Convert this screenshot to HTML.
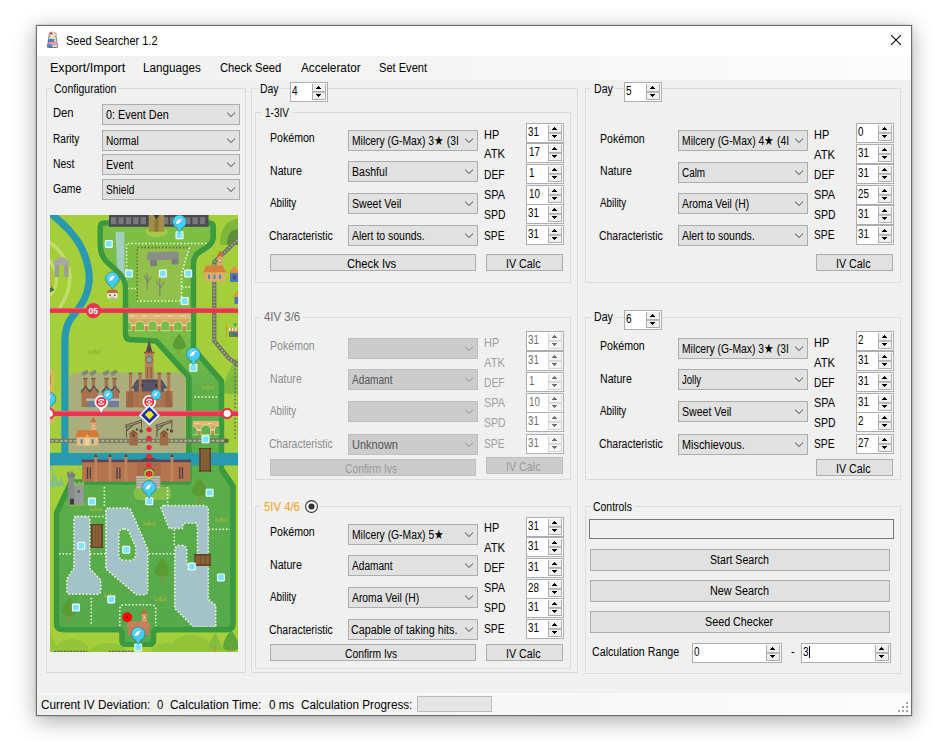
<!DOCTYPE html><html><head><meta charset="utf-8"><title>Seed Searcher 1.2</title><style>
*{box-sizing:border-box;margin:0;padding:0}
html,body{width:943px;height:742px;overflow:hidden;background:#fff}
body{position:relative;font-family:"Liberation Sans",sans-serif;font-size:12px;color:#000}
#win{position:absolute;left:36px;top:25px;width:876px;height:691px;background:#f0f0f0;border:1px solid #6f6f6f;box-shadow:0 0 2px rgba(0,0,0,.3),0 5px 20px 1px rgba(0,0,0,.30)}
#c{position:absolute;left:-37px;top:-26px;width:943px;height:742px}
.a{position:absolute;white-space:nowrap}
.t{position:absolute;white-space:nowrap;line-height:16px;transform-origin:0 0}
#title{left:37px;top:26px;width:874px;height:30px;background:#fff}
#menu{left:37px;top:56px;width:874px;height:24px;background:linear-gradient(90deg,#f0f0f0 0,#fcfcfc 100%)}
#status{left:37px;top:693px;width:874px;height:22px;background:linear-gradient(90deg,#f0f0f0 0,#fcfcfc 100%);border-top:1px solid #f9f9f9}
.gb{border:1px solid #dcdcdc}
.gl{background:#f0f0f0}
.cb{background:#e1e1e1;border:1px solid #adadad}
.cb.d{background:#cccccc;border-color:#bfbfbf}
.bt{background:#e1e1e1;border:1px solid #adadad}
.bt.d{background:#cccccc;border-color:#bfbfbf}
.nu{background:#fff;border:1px solid #abadb3}
.nu i{position:absolute;right:1px;width:14px;height:8px;background:#f0f0f0;border:1px solid #adadad;border-top:0}
.nu i.u{top:1px;border-bottom-color:#b2b2b2}
.nu i.w{top:9px;border-top:1px solid #bdbdbd}
.nu.d i.w{border-top-color:#dcdcdc}
.nu i b{position:absolute;background:#000;height:1px}
.nu.d i{background:#f4f4f4;border-color:#d4d4d4}
.nu.d i b{background:#707070}
</style></head><body><div id="win"><div id="c">
<div class="a" id="title"></div>
<div class="a" id="menu"></div>
<div class="a" id="status"></div>
<svg class="a" style="left:46px;top:31px" width="13" height="18" viewBox="0 0 13 18">
<path d="M3.4 1.6 Q6.5 -0.2 9.8 1.8 Q11 3.6 10.2 5.6 Q11 6.6 10.6 8 Q11.6 10 11.2 12 Q12.4 14.2 11.8 16.4 Q6.5 17.8 1.3 16.4 Q0.6 14.2 1.8 12 Q1.4 10 2.4 8 Q2 6.6 2.8 5.6 Q2.2 3.4 3.4 1.6 Z" fill="#5e554c" opacity="0.92"/>
<ellipse cx="6.6" cy="3.5" rx="3.3" ry="2.5" fill="#f3ead8"/>
<ellipse cx="5.2" cy="2.6" rx="1.5" ry="1.1" fill="#c4423e"/>
<ellipse cx="8.3" cy="3.2" rx="1.1" ry="0.9" fill="#e9d6a8"/>
<path d="M3.1 5.8 Q6.5 4.8 9.9 5.8 L10 7.8 Q6.5 8.8 3 7.8 Z" fill="#f4dfbc"/>
<path d="M2.9 8 Q5.8 7.3 8 8.2 L8.4 11.2 Q5.5 12 2.6 11.2 Z" fill="#4686d8"/>
<path d="M8 8.2 Q9.8 7.9 10.3 8.5 L10.7 11.2 L8.4 11.2 Z" fill="#e6dac6"/>
<path d="M2.4 11.3 Q6.5 10.5 10.8 11.3 L11 13.2 Q6.5 14.2 2.2 13.2 Z" fill="#f393b2"/>
<path d="M2 13.6 Q4.4 13.2 6.2 13.8 L6.2 16.2 Q3.9 16.6 1.8 15.8 Z" fill="#3f8de0"/>
<path d="M6.4 13.8 Q9 13.4 11.2 13.8 L11.2 15.8 Q9 16.5 6.4 16.2 Z" fill="#dde7ee"/>
<circle cx="8.3" cy="14.5" r="0.7" fill="#dfa548"/>
</svg>

<div class="t" style="left:66.01px;top:33px;font-size:12.5px;transform:scaleX(0.8778)">Seed Searcher 1.2</div>
<svg class="a" style="left:890px;top:34px" width="12" height="12" viewBox="0 0 12 12"><path d="M1.1 1.1 L10.9 10.9 M10.9 1.1 L1.1 10.9" stroke="#000" stroke-width="1.1" fill="none"/></svg>
<div class="t" style="left:49.50px;top:60px;font-size:12.5px;transform:scaleX(1.0035)">Export/Import</div>
<div class="t" style="left:143.06px;top:60px;font-size:12.5px;transform:scaleX(0.9350)">Languages</div>
<div class="t" style="left:219.94px;top:60px;font-size:12.5px;transform:scaleX(0.8994)">Check Seed</div>
<div class="t" style="left:300.50px;top:60px;font-size:12.5px;transform:scaleX(0.9436)">Accelerator</div>
<div class="t" style="left:378.75px;top:60px;font-size:12.5px;transform:scaleX(0.8862)">Set Event</div>
<div class="a gb" style="left:46px;top:88px;width:200px;height:585px;"></div>
<div class="a gl" style="left:52px;top:88px;width:66px;height:1px;"></div>
<div class="t" style="left:54.23px;top:81px;font-size:12.5px;transform:scaleX(0.8395)">Configuration</div>
<div class="t" style="left:53.10px;top:105px;font-size:12.5px;transform:scaleX(0.8976)">Den</div>
<div class="t" style="left:53.19px;top:131px;font-size:12.5px;transform:scaleX(0.8091)">Rarity</div>
<div class="t" style="left:53.16px;top:156px;font-size:12.5px;transform:scaleX(0.8351)">Nest</div>
<div class="t" style="left:52.78px;top:181px;font-size:12.5px;transform:scaleX(0.8298)">Game</div>
<div class="a cb" style="left:102px;top:104px;width:138px;height:21px;"></div>
<svg class="a" style="left:225px;top:111px" width="12" height="8" viewBox="0 0 12 8"><path d="M2 1.6 L6 5.5 L10 1.6" fill="none" stroke="#3c3c3c" stroke-width="0.95"/></svg>
<div class="t" style="left:105.87px;top:107px;font-size:12.5px;transform:scaleX(0.8689)">0: Event Den</div>
<div class="a cb" style="left:102px;top:130px;width:138px;height:21px;"></div>
<svg class="a" style="left:225px;top:137px" width="12" height="8" viewBox="0 0 12 8"><path d="M2 1.6 L6 5.5 L10 1.6" fill="none" stroke="#3c3c3c" stroke-width="0.95"/></svg>
<div class="t" style="left:105.94px;top:133px;font-size:12.5px;transform:scaleX(0.8116)">Normal</div>
<div class="a cb" style="left:102px;top:154px;width:138px;height:21px;"></div>
<svg class="a" style="left:225px;top:161px" width="12" height="8" viewBox="0 0 12 8"><path d="M2 1.6 L6 5.5 L10 1.6" fill="none" stroke="#3c3c3c" stroke-width="0.95"/></svg>
<div class="t" style="left:105.90px;top:157px;font-size:12.5px;transform:scaleX(0.8487)">Event</div>
<div class="a cb" style="left:102px;top:179px;width:138px;height:21px;"></div>
<svg class="a" style="left:225px;top:186px" width="12" height="8" viewBox="0 0 12 8"><path d="M2 1.6 L6 5.5 L10 1.6" fill="none" stroke="#3c3c3c" stroke-width="0.95"/></svg>
<div class="t" style="left:105.79px;top:182px;font-size:12.5px;transform:scaleX(0.8154)">Shield</div>
<svg class="a" style="left:50px;top:215px" width="188" height="437" viewBox="0 0 188 437">
<defs>
<clipPath id="mc"><rect x="0" y="0" width="188" height="437"/></clipPath>
<linearGradient id="wg" x1="0" y1="0" x2="0" y2="1"><stop offset="0" stop-color="#7cbf43"/><stop offset="0.27" stop-color="#79bd45"/><stop offset="0.40" stop-color="#5eb04a"/><stop offset="1" stop-color="#56a94b"/></linearGradient>
<radialGradient id="pg" cx="0.4" cy="0.3" r="0.8"><stop offset="0" stop-color="#52e0fb"/><stop offset="1" stop-color="#34c6f2"/></radialGradient>
<g id="den"><rect x="-4" y="-4" width="8" height="8" rx="1.3" fill="#f4fdff"/><rect x="-2.9" y="-2.9" width="5.8" height="5.8" rx="0.6" fill="#7ae4fb"/></g>
<g id="fth"><path d="M-4.4 3.4 C-3.8 0.5 -2.6 -2.4 0 -3.2 C1.6 -3.7 3.2 -3.7 4.5 -3.9 C3.8 -2.6 2.6 -2 1.2 -1.7 C1.9 -1.5 2.4 -1.4 2.9 -1.3 C2.3 -0.2 1.4 0.3 0.3 0.4 C0.8 0.7 1.1 0.9 1.5 1 C0.7 1.9 -0.4 2.1 -1.4 2 C-2.6 2.2 -3.6 2.8 -4.4 3.4 Z" fill="#fff" stroke="#2f8ae2" stroke-width="0.55" stroke-linejoin="round"/></g>
<g id="pin"><path d="M-2.9 5.9 L0 10.8 L2.9 5.9 Z" fill="#3fd0f4" stroke="#2a5f6c" stroke-width="0.5"/><circle r="6.9" fill="url(#pg)" stroke="#2a5f6c" stroke-width="0.55"/><path d="M-2.5 5.7 L0 9.9 L2.5 5.7 Z" fill="#3fd0f4"/><use href="#fth"/></g>
<g id="spin"><circle r="5.1" fill="url(#pg)" stroke="#2a5f6c" stroke-width="0.45"/><g transform="scale(0.7)"><use href="#fth"/></g></g>
<g id="pk"><path d="M-2.6 5.9 L0 11 L2.6 5.9 Z" fill="#fff" stroke="#8f8f8f" stroke-width="0.5"/><circle r="6.9" fill="#fff" stroke="#9a9a9a" stroke-width="0.55"/><path d="M-2.3 5.9 L0 10.2 L2.3 5.9 Z" fill="#fff"/><circle r="4.1" fill="#fff" stroke="#ec2230" stroke-width="1.7"/><rect x="-4.4" y="-0.65" width="8.8" height="1.3" fill="#ec2230"/><circle r="1.7" fill="#fff" stroke="#ec2230" stroke-width="1"/></g>
<g id="tree"><rect x="-0.5" y="8" width="1" height="8" fill="#b5763f"/><path d="M0 -9 C3 -5 7.5 0.5 7.5 4.5 C7.5 8 4 9.5 0 9.5 C-4 9.5 -7.5 8 -7.5 4.5 C-7.5 0.5 -3 -5 0 -9 Z" fill="#5a9c34"/></g>
<g id="crown"><path d="M-6 2.5 L-6 -2 L-3 0.5 L0 -2.5 L3 0.5 L6 -2 L6 2.5 Z" fill="#8db23f" opacity="0.85"/></g>
</defs>
<g clip-path="url(#mc)">
<rect width="188" height="437" fill="#a5cf3a"/>
<g fill="none" stroke="#c3de68" stroke-width="3.4"><path d="M-2 26 C10 34 20 48 19.8 63 C19.6 76 15 86 8 95"/><path d="M-2 44 C4 50 7 57 6.5 65 C6 72 3 78 -2 82"/></g>
<path d="M0 69 L4.5 75 L0 77.5 Z" fill="#3f7f34"/>
<rect x="0" y="58" width="1.4" height="15" fill="#c9b04a"/>
<g fill="#9a9d96"><rect x="4.6" y="48" width="4.4" height="14" /><rect x="14.2" y="48" width="4.4" height="14"/><rect x="3.5" y="45" width="15.5" height="5" rx="1" fill="#a6a9a2"/><rect x="6.5" y="42.5" width="9.5" height="3.5" rx="1" fill="#a6a9a2"/></g>
<g fill="#92c43a"><ellipse cx="22" cy="437" rx="17" ry="13"/><ellipse cx="58" cy="440" rx="20" ry="12"/><ellipse cx="118" cy="441" rx="18" ry="13"/><ellipse cx="141" cy="437" rx="22" ry="17"/><ellipse cx="172" cy="440" rx="16" ry="10"/><path d="M0 418 L7 432 L0 437 Z"/></g>
<g><path d="M165 418 C168 422 171 428 171 432 C171 436 159 436 159 432 C159 428 162 422 165 418 Z" fill="#86bd3c"/><rect x="164.6" y="431" width="0.8" height="6" fill="#c97a3f"/><path d="M181 415 C185 420 189 427 189 432 C189 437 173 437 173 432 C173 427 177 420 181 415 Z" fill="#5da63a"/><rect x="180.6" y="430" width="0.9" height="7" fill="#c97a3f"/></g>
<path d="M170 30 C170 12 178 4 190 4 L190 30 Z" fill="#7fb63c"/><path d="M177 30 C177 18 182 14 190 14 L190 30 Z" fill="#5c8f3a"/>
<path d="M172 175 C176 160 182 148 190 140 L190 178 Z" fill="#86bf3e"/><path d="M168 178 C174 168 182 160 190 158 L190 180 Z" fill="#78b53c" opacity="0.8"/>
<g fill="#7fc08a" opacity="0.85"><path d="M4 257 L10 272 L-2 272 Z"/><path d="M11 262 L15 271 L7 271 Z"/><path d="M0 246 L4 256 L-4 256 Z"/></g>
<path d="M54 8 H159.5 Q163.3 8 163.3 12 V21 C163.3 36 143.5 33 143.5 48 V134 L171.5 166 V254 L183 271 V409 Q183 414.6 177 414.6 H107.5 Q103.5 414.6 103.5 418.6 V425.5 Q103.5 429.5 99.5 429.5 H76 Q72 429.5 72 425.5 V418.6 Q72 414.6 68 414.6 H12.5 Q6.5 414.6 6.5 409 V298 L21 267 H138.8 V162 L106.3 126 L80 124.6 Q75.5 124.2 75.5 119 V73 C75.5 53 50.3 52 50.3 31 V12 Q50.3 8 54 8 Z" fill="url(#wg)" stroke="#3c9a3e" stroke-width="5.2" stroke-linejoin="round"/>
<path d="M65.5 17 H74.4 V62 L67.5 62 Z" fill="#a7cfd0" opacity="0.9"/>
<ellipse cx="106.5" cy="16.5" rx="11" ry="5.5" fill="#a3c948"/>
<path d="M87.3 32.6 H139.5 L131.6 58 V85 H87.3 Z" fill="#93bf4c"/>
<path d="M87.3 85 V32.6 H139.5" fill="none" stroke="#6e7433" stroke-width="1.6" stroke-dasharray="1.6 1.9"/>
<path d="M139.5 32.6 L131.6 58 V86 H87.3" fill="none" stroke="#ecf7da" stroke-width="1.6" stroke-dasharray="1.6 1.9"/>
<path d="M160 28.5 H76.5 V73.5 H87" fill="none" stroke="#ecf7da" stroke-width="1.6" stroke-dasharray="1.6 1.9"/>
<path d="M131.6 72 H140" fill="none" stroke="#ecf7da" stroke-width="1.6" stroke-dasharray="1.6 1.9"/>
<g fill="#8b8e88"><path d="M97 39.5 Q97 37.5 99.5 37.3 L126 36.5 Q129 36.5 129 39 L129 43 Q129 44.5 127 44.6 L99 45.6 Q97 45.6 97 43.5 Z"/><rect x="100" y="45" width="7" height="6.3" rx="1.5" fill="#7d807a"/><rect x="121.5" y="43.5" width="7" height="6" rx="1.5" fill="#7d807a"/></g>
<g fill="none" stroke="#83876f" stroke-width="1.3" stroke-linecap="round"><path d="M97.2 74 V59 M97.2 66 L94 60.5 M97.2 68 L101 62"/><path d="M109.8 80.5 V64.5 M109.8 72 L106.5 66.5 M109.8 73.5 L113.8 67.5"/></g>
<g transform="translate(129.2 126.5) scale(0.85)"><use href="#tree"/></g>
<path d="M144.5 182 H167" fill="none" stroke="#ecf7da" stroke-width="1.6" stroke-dasharray="1.6 1.9"/>
<use href="#crown" x="158" y="171.5"/>
<rect x="84" y="272" width="37" height="13" rx="5" fill="#8cc24a" opacity="0.85"/>
<path d="M27 301.5 H36.5 Q39.8 301.5 39.8 305 V353.5 L50.8 365 V375 Q50.8 379.3 46.5 379.3 H21 Q16.8 379.3 16.8 375 V364 L23.9 353.5 V305 Q23.9 301.5 27 301.5 Z" fill="#a3c3c9" stroke="#ecf7da" stroke-width="1.6" stroke-dasharray="1.6 1.9"/>
<path d="M59 293 H77 Q80.5 293 81.7 297 L97.7 334 V375.5 Q97.7 379.7 93.5 379.7 H88 Q86 379.7 85 378.5 L55.8 354 V296 Q55.8 293 59 293 Z" fill="#a3c3c9" stroke="#ecf7da" stroke-width="1.6" stroke-dasharray="1.6 1.9"/>
<path d="M74 314 Q77.5 314 79 317 L85.7 332 V339 Q85.7 345.4 79.5 345.4 H75 Q68.8 345.4 68.8 339 V319 Q68.8 314 74 314 Z" fill="#5db04a" stroke="#ecf7da" stroke-width="1.6" stroke-dasharray="1.6 1.9"/>
<path d="M114 290.5 H153 Q158.3 290.5 158.3 295.5 V384.2 L165.7 390.3 V412 H143.5 L124.7 393.3 V335 Q124.7 330.2 130.7 330.2 Q136.8 330.2 136.8 335 V350.8 H147.5 V313.4 L146.5 308.3 H133.4 L132.4 313.4 H119.2 L111.1 293.5 Q110.8 290.5 114 290.5 Z" fill="#a3c3c9" stroke="#ecf7da" stroke-width="1.6" stroke-dasharray="1.6 1.9"/>
<path d="M54.4 272 V293" fill="none" stroke="#ecf7da" stroke-width="1.6" stroke-dasharray="1.6 1.9"/>
<path d="M117.6 272 V290" fill="none" stroke="#ecf7da" stroke-width="1.6" stroke-dasharray="1.6 1.9"/>
<path d="M24 301.5 H54" fill="none" stroke="#ecf7da" stroke-width="1.6" stroke-dasharray="1.6 1.9"/>
<path d="M9 338.8 H22" fill="none" stroke="#ecf7da" stroke-width="1.6" stroke-dasharray="1.6 1.9"/>
<path d="M40 338.8 H55.8" fill="none" stroke="#ecf7da" stroke-width="1.6" stroke-dasharray="1.6 1.9"/>
<path d="M98.7 338.8 H124" fill="none" stroke="#ecf7da" stroke-width="1.6" stroke-dasharray="1.6 1.9"/>
<path d="M41.3 382.7 V410" fill="none" stroke="#ecf7da" stroke-width="1.6" stroke-dasharray="1.6 1.9"/>
<path d="M158.5 314.2 H180" fill="none" stroke="#ecf7da" stroke-width="1.6" stroke-dasharray="1.6 1.9"/>
<path d="M124.3 314.5 V330" fill="none" stroke="#ecf7da" stroke-width="1.6" stroke-dasharray="1.6 1.9"/>
<path d="M69.8 411 V394.5 Q69.8 389.8 74.5 389.8 H101 Q105.7 389.8 105.7 394.5 V411" fill="none" stroke="#ecf7da" stroke-width="1.6" stroke-dasharray="1.6 1.9"/>
<g opacity="0.9"><path d="M38.7 139 L38.7 134.3 L41.7 136.8 L44.7 133.8 L47.7 136.8 L50.7 134.3 L50.7 139 Z" fill="#93b83b"/></g>
<use href="#crown" x="45.9" y="293.6"/>
<use href="#crown" x="99.1" y="307.9"/>
<use href="#crown" x="171.5" y="304.3"/>
<use href="#crown" x="110.6" y="383.7"/>
<use href="#crown" x="60" y="380"/>
<use href="#tree" x="112" y="352"/>
<use href="#tree" x="19.3" y="391.5"/>
<use href="#tree" x="149.7" y="272"/>
<rect x="40.9" y="309" width="11.9" height="23.8" fill="#8a6238"/><rect x="40.9" y="309" width="1.6" height="23.8" fill="#5e4226"/><rect x="51.199999999999996" y="309" width="1.6" height="23.8" fill="#5e4226"/><rect x="40.3" y="309" width="13.1" height="1.2" fill="#5e4226"/><rect x="40.3" y="331.6" width="13.1" height="1.2" fill="#5e4226"/><rect x="45.18" y="310.2" width="0.7" height="21.400000000000002" fill="#75522e"/><rect x="48.28" y="310.2" width="0.7" height="21.400000000000002" fill="#75522e"/>
<rect x="144.5" y="339.1" width="16.2" height="11.7" fill="#8a6238"/><rect x="144.5" y="339.1" width="16.2" height="1.6" fill="#5e4226"/><rect x="144.5" y="349.2" width="16.2" height="1.6" fill="#5e4226"/><rect x="144.5" y="338.6" width="1.2" height="12.7" fill="#5e4226"/><rect x="159.5" y="338.6" width="1.2" height="12.7" fill="#5e4226"/><rect x="149.846" y="340.70000000000005" width="0.8" height="8.5" fill="#6d4c2b"/><rect x="155.192" y="340.70000000000005" width="0.8" height="8.5" fill="#6d4c2b"/>
<path d="M54 8 H159.5 Q163.3 8 163.3 12 V21 C163.3 36 143.5 33 143.5 48 V134 L171.5 166 V254 L183 271 V409 Q183 414.6 177 414.6 H107.5 Q103.5 414.6 103.5 418.6 V425.5 Q103.5 429.5 99.5 429.5 H76 Q72 429.5 72 425.5 V418.6 Q72 414.6 68 414.6 H12.5 Q6.5 414.6 6.5 409 V298 L21 267 H138.8 V162 L106.3 126 L80 124.6 Q75.5 124.2 75.5 119 V73 C75.5 53 50.3 52 50.3 31 V12 Q50.3 8 54 8 Z" fill="none" stroke="#3c9a3e" stroke-width="5.2" stroke-linejoin="round"/>
<path d="M-2 -3 C12 6 27 22 33 36 C38 48 40 58 39 68 C37.5 82 30 93 22 102 C16.5 109 14.9 116 14.9 126 V240" fill="none" stroke="#279ab0" stroke-width="7.2"/>
<rect x="-1" y="237.8" width="190" height="12.6" fill="#279ab0"/>
<path d="M27 157.5 H127.5 Q135.5 157.5 135.5 165.5 V237.8 H19 V165.5 Q19 157.5 27 157.5 Z" fill="#a9ae7c"/>
<g clip-path="url(#bc77)"><clipPath id="bc77"><rect x="77.9" y="98.4" width="63.3" height="18.1"/></clipPath><rect x="77.9" y="98.4" width="63.3" height="12.0" fill="#d2a865"/><rect x="77.9" y="98.4" width="63.3" height="5.7" fill="#dcba76"/><path d="M79.9 101.0 H139.2" stroke="#f0dca0" stroke-width="1" stroke-dasharray="4.5 8.2" fill="none"/><path d="M73.7 115.8 V110.4 A3.9 3.9 0 0 1 81.5 110.4 V115.8 Z" fill="#78bd45" stroke="#f1e3b4" stroke-width="0.8"/><path d="M85.0 115.8 V110.4 A4.8 4.8 0 0 1 94.5 110.4 V115.8 Z" fill="#78bd45" stroke="#f1e3b4" stroke-width="0.8"/><path d="M98.0 115.8 V110.4 A4.6 4.6 0 0 1 107.2 110.4 V115.8 Z" fill="#78bd45" stroke="#f1e3b4" stroke-width="0.8"/><path d="M110.8 115.8 V110.4 A4.6 4.6 0 0 1 120.0 110.4 V115.8 Z" fill="#78bd45" stroke="#f1e3b4" stroke-width="0.8"/><path d="M123.5 115.8 V110.4 A4.5 4.5 0 0 1 132.4 110.4 V115.8 Z" fill="#78bd45" stroke="#f1e3b4" stroke-width="0.8"/><path d="M135.9 115.8 V110.4 A4.8 4.8 0 0 1 145.4 110.4 V115.8 Z" fill="#78bd45" stroke="#f1e3b4" stroke-width="0.8"/><rect x="81.55" y="110.2" width="3.5" height="5.3" fill="#c98c52"/><rect x="81.00" y="109.8" width="4.6" height="1.3" fill="#ecdcae"/><rect x="94.55" y="110.2" width="3.5" height="5.3" fill="#c98c52"/><rect x="94.00" y="109.8" width="4.6" height="1.3" fill="#ecdcae"/><rect x="107.25" y="110.2" width="3.5" height="5.3" fill="#c98c52"/><rect x="106.70" y="109.8" width="4.6" height="1.3" fill="#ecdcae"/><rect x="119.95" y="110.2" width="3.5" height="5.3" fill="#c98c52"/><rect x="119.40" y="109.8" width="4.6" height="1.3" fill="#ecdcae"/><rect x="132.45" y="110.2" width="3.5" height="5.3" fill="#c98c52"/><rect x="131.90" y="109.8" width="4.6" height="1.3" fill="#ecdcae"/></g>
<g clip-path="url(#bc142)"><clipPath id="bc142"><rect x="142.6" y="205.8" width="26.6" height="14.7"/></clipPath><rect x="142.6" y="205.8" width="26.6" height="9.2" fill="#d2a865"/><rect x="142.6" y="205.8" width="26.6" height="4.8" fill="#dcba76"/><path d="M144.6 208.4 H167.2" stroke="#f0dca0" stroke-width="1" stroke-dasharray="4.5 8.2" fill="none"/><path d="M138.3 219.8 V215.0 A4.5 4.5 0 0 1 147.2 215.0 V219.8 Z" fill="#62b24a" stroke="#f1e3b4" stroke-width="0.8"/><path d="M150.8 219.8 V215.0 A5.0 5.0 0 0 1 160.8 215.0 V219.8 Z" fill="#62b24a" stroke="#f1e3b4" stroke-width="0.8"/><path d="M164.3 219.8 V215.0 A4.5 4.5 0 0 1 173.4 215.0 V219.8 Z" fill="#62b24a" stroke="#f1e3b4" stroke-width="0.8"/><rect x="147.25" y="214.8" width="3.5" height="4.7" fill="#c98c52"/><rect x="146.70" y="214.4" width="4.6" height="1.3" fill="#ecdcae"/><rect x="160.85" y="214.8" width="3.5" height="4.7" fill="#c98c52"/><rect x="160.30" y="214.4" width="4.6" height="1.3" fill="#ecdcae"/></g>
<rect x="59" y="-1" width="99.5" height="12.8" fill="#4a4b4d"/>
<rect x="61.0" y="2.2" width="5.4" height="7" fill="#77787a"/>
<rect x="68.4" y="2.2" width="5.4" height="7" fill="#77787a"/>
<rect x="75.8" y="2.2" width="5.4" height="7" fill="#77787a"/>
<rect x="83.2" y="2.2" width="5.4" height="7" fill="#77787a"/>
<rect x="90.6" y="2.2" width="5.4" height="7" fill="#77787a"/>
<rect x="112.8" y="2.2" width="5.4" height="7" fill="#77787a"/>
<rect x="120.2" y="2.2" width="5.4" height="7" fill="#77787a"/>
<rect x="127.6" y="2.2" width="5.4" height="7" fill="#77787a"/>
<rect x="135.0" y="2.2" width="5.4" height="7" fill="#77787a"/>
<rect x="142.4" y="2.2" width="5.4" height="7" fill="#77787a"/>
<rect x="149.8" y="2.2" width="5.4" height="7" fill="#77787a"/>
<rect x="98.7" y="-1" width="15.6" height="17.6" fill="#a38d47"/><path d="M103.5 0 L106.5 5 L109.5 0 Z" fill="#3d3d3d"/><rect x="104.5" y="5" width="4" height="11.6" fill="#8a7638"/>
<path d="M190 22.5 L164.3 47 V126 L179 143.5 L190 151" fill="none" stroke="#6c725e" stroke-width="4.2"/><path d="M190 22.5 L164.3 47 V126 L179 143.5 L190 151" fill="none" stroke="#a3a88c" stroke-width="2" stroke-dasharray="1.8 1.6"/>
<path d="M-1 225.7 H176" fill="none" stroke="#6c725a" stroke-width="4"/><path d="M0.5 225.7 H175" fill="none" stroke="#a9ad94" stroke-width="2.1" stroke-dasharray="3.3 1.3"/><circle cx="176.5" cy="225.7" r="2.3" fill="#5f6350"/>
<path d="M185 146 V226 M188.3 150 V222" fill="none" stroke="#66705a" stroke-width="1.5" stroke-dasharray="1.6 2.2"/>
<path d="M4 436.3 H37 M59 436.3 H84" fill="none" stroke="#5d6647" stroke-width="1.2" stroke-dasharray="2 1.2"/>
<g><rect x="167.6" y="41" width="4.8" height="14" fill="#d9a868"/><path d="M166.8 41.5 L170 35.5 L173.2 41.5 Z" fill="#c9683a"/><circle cx="170" cy="45.5" r="1.5" fill="#f3e6c4" stroke="#a5503a" stroke-width="0.5"/><path d="M152.5 57.5 L156.5 50.5 H172.5 L177 57.5 Z" fill="#d7813c"/><rect x="154.8" y="57.5" width="20.5" height="9" fill="#dcae6e"/><rect x="158" y="59.5" width="2" height="4.5" fill="#5a86a8"/><rect x="163.5" y="59.5" width="2" height="4.5" fill="#5a86a8"/><rect x="169" y="59.5" width="2" height="4.5" fill="#5a86a8"/><path d="M178.5 58 L184 51 L190 57 V58 Z" fill="#e0913c"/><rect x="180" y="58" width="10" height="9" fill="#4f77b8"/><rect x="183" y="60.5" width="2.4" height="4" fill="#2f4f86"/><path d="M183 82 L188 75 L190 77 V82 Z" fill="#e0913c"/><rect x="184.5" y="82" width="6" height="7" fill="#4f77b8"/></g>
<g><rect x="176" y="109" width="0.7" height="13" fill="#c28a3c"/><path d="M176.7 109 L180 110.3 L176.7 111.6 Z" fill="#e7c34a"/><path d="M183 108.5 L187.5 108.5 L185.2 111.5 Z" fill="#2f9a8f"/><rect x="179" y="113" width="9" height="3.4" fill="#f1ece0"/><rect x="180.5" y="113" width="1.5" height="3.4" fill="#e08a3a"/><rect x="183.5" y="113" width="1.5" height="3.4" fill="#e08a3a"/><rect x="186.5" y="113" width="1.5" height="3.4" fill="#e08a3a"/><rect x="179" y="116.4" width="9" height="5.5" fill="#7d6a4c"/><rect x="180" y="118" width="3" height="3" fill="#3f8f6a"/><rect x="184" y="118" width="3" height="3" fill="#3d6fb0"/></g>
<g><path d="M56.3 78 L58.5 74.8 H66.3 L68.5 78 Z" fill="#c4673a"/><rect x="57.2" y="78" width="10.4" height="5.2" rx="1" fill="#f0e4d2"/><rect x="59.3" y="79.3" width="1.4" height="1.8" fill="#555"/><rect x="64" y="79.3" width="1.4" height="1.8" fill="#555"/><rect x="60.5" y="81.8" width="3.8" height="1.4" fill="#9cc7e0"/></g>
<path d="M-1 155 H2.5 Q4.3 155 4.3 157 V209 H-1 Z" fill="#d4ba52"/><rect x="-1" y="160" width="2" height="10" fill="#b98f45"/>
<g fill="#85877c"><circle cx="34.0" cy="158.5" r="2.2"/><circle cx="36.5" cy="157" r="2"/><circle cx="42.0" cy="158.5" r="2.2"/><circle cx="44.5" cy="157" r="2"/></g><rect x="33.7" y="163.5" width="3.4" height="9" fill="#a9714c"/><rect x="33.3" y="162.8" width="4.2" height="1.6" fill="#8c5a3c"/><rect x="41.7" y="163.5" width="3.4" height="9" fill="#a9714c"/><rect x="41.3" y="162.8" width="4.2" height="1.6" fill="#8c5a3c"/><rect x="31.5" y="174" width="16.5" height="18" fill="#a9714c"/><path d="M30.7 176.5 L35.5 170.5 L39.7 175.5 L43.9 170.5 L48.8 176.5 L48.8 178.2 L43.9 172.8 L39.7 177.8 L35.5 172.8 L30.7 178.2 Z" fill="#4b4c5c"/><rect x="36.0" y="183.5" width="13" height="2.4" fill="#b8bcc0"/><rect x="37.0" y="185.9" width="11" height="6.3" fill="#6f7f9a"/>
<g fill="#85877c"><circle cx="55.0" cy="158.5" r="2.2"/><circle cx="57.5" cy="157" r="2"/><circle cx="63.0" cy="158.5" r="2.2"/><circle cx="65.5" cy="157" r="2"/></g><rect x="54.7" y="163.5" width="3.4" height="9" fill="#a9714c"/><rect x="54.3" y="162.8" width="4.2" height="1.6" fill="#8c5a3c"/><rect x="62.7" y="163.5" width="3.4" height="9" fill="#a9714c"/><rect x="62.3" y="162.8" width="4.2" height="1.6" fill="#8c5a3c"/><rect x="52.5" y="174" width="16.5" height="18" fill="#a9714c"/><path d="M51.7 176.5 L56.5 170.5 L60.7 175.5 L64.9 170.5 L69.8 176.5 L69.8 178.2 L64.9 172.8 L60.7 177.8 L56.5 172.8 L51.7 178.2 Z" fill="#4b4c5c"/><rect x="57.0" y="183.5" width="13" height="2.4" fill="#b8bcc0"/><rect x="58.0" y="185.9" width="11" height="6.3" fill="#6f7f9a"/>
<g><path d="M99.1 124.7 L102.6 137.5 H95.6 Z" fill="#5a4a50"/><rect x="94.8" y="137.2" width="8.8" height="31" fill="#b58258"/><rect x="94" y="136.8" width="10.4" height="1.6" fill="#8c5a3c"/><circle cx="99.2" cy="144.6" r="3.3" fill="#7fa7a2" stroke="#8c5a3c" stroke-width="0.9"/><rect x="96.8" y="152" width="1.3" height="11" fill="#8c5a3c"/><rect x="100.3" y="152" width="1.3" height="11" fill="#8c5a3c"/><rect x="76" y="176" width="46.6" height="16.3" fill="#a9714c"/><path d="M81.5 173.5 L87 164.5 H111.5 L117.5 173.5 Z" fill="#4b4c5c"/><rect x="84" y="167.5" width="30" height="9" fill="#5a5468"/><rect x="88" y="169" width="1.6" height="3.2" fill="#2e2e3a"/><rect x="91.5" y="169" width="1.6" height="3.2" fill="#2e2e3a"/><rect x="105.5" y="169" width="1.6" height="3.2" fill="#2e2e3a"/><rect x="109" y="169" width="1.6" height="3.2" fill="#2e2e3a"/><rect x="79" y="158.5" width="3" height="33.8" fill="#b07850"/><rect x="78.6" y="157.6" width="3.8" height="1.6" fill="#8c5a3c"/><rect x="88.6" y="158.5" width="3" height="33.8" fill="#b07850"/><rect x="88.19999999999999" y="157.6" width="3.8" height="1.6" fill="#8c5a3c"/><rect x="107.8" y="158.5" width="3" height="33.8" fill="#b07850"/><rect x="107.39999999999999" y="157.6" width="3.8" height="1.6" fill="#8c5a3c"/><rect x="117.2" y="158.5" width="3" height="33.8" fill="#b07850"/><rect x="116.8" y="157.6" width="3.8" height="1.6" fill="#8c5a3c"/><path d="M76 192.3 L79 176 H83 V192.3 Z" fill="#8c5a3c" opacity="0.55"/><path d="M122.6 192.3 L119.6 176 H115.6 V192.3 Z" fill="#8c5a3c" opacity="0.55"/><rect x="93" y="181" width="12.5" height="11.3" fill="#96603e"/></g>
<g><rect x="41" y="207" width="5" height="11" fill="#e0b478"/><path d="M40.3 207.4 L43.5 201.8 L46.7 207.4 Z" fill="#cc6c3c"/><circle cx="43.5" cy="210.6" r="1.5" fill="#f3e6c4" stroke="#a5503a" stroke-width="0.5"/><path d="M25 222.3 L28.2 215 H46.6 L50 222.3 Z" fill="#d9803f"/><path d="M25.6 221 H49.4 M26.6 218.8 H48.4 M27.6 216.8 H47.4" stroke="#c56f36" stroke-width="0.6" fill="none"/><rect x="26.8" y="222.3" width="21.5" height="8.2" fill="#e2bd84"/><rect x="30.5" y="224" width="2.2" height="5" rx="1" fill="#5a86a8"/><rect x="41.5" y="224" width="2.2" height="5" rx="1" fill="#5a86a8"/><rect x="35.3" y="222.3" width="4" height="8.2" fill="#ecd09c"/><path d="M34.6 222.6 L37.3 219 L40 222.6 Z" fill="#e8a05a"/></g>
<g fill="none" stroke="#6a584c" stroke-width="1.1"><path d="M76.5 222.5 V210.3 M74.9 210.6 L91.5 205.2 M75.3 212.4 L91.5 207 M91.5 204.8 V212 M76.5 216 L84.5 209"/></g><circle cx="91.1" cy="216" r="1.7" fill="#5b4a40"/><path d="M91.1 211.5 V215" stroke="#5b4a40" stroke-width="0.6"/><circle cx="87.0" cy="214.5" r="1.2" fill="#5b4a40"/>
<g fill="none" stroke="#6a584c" stroke-width="1.1"><path d="M106.9 222.5 V210.3 M105.30000000000001 210.6 L121.9 205.2 M105.7 212.4 L121.9 207 M121.9 204.8 V212 M106.9 216 L114.9 209"/></g><circle cx="121.5" cy="216" r="1.7" fill="#5b4a40"/><path d="M121.5 211.5 V215" stroke="#5b4a40" stroke-width="0.6"/><circle cx="117.4" cy="214.5" r="1.2" fill="#5b4a40"/>
<rect x="79.4" y="218.5" width="8.2" height="12" fill="#a06a46"/><path d="M78.80000000000001 219 L83.5 214.6 L88.2 219 Z" fill="#8c5a3c"/><circle cx="83.5" cy="220.5" r="1.3" fill="#6d4632"/>
<rect x="109.9" y="218.5" width="8.2" height="12" fill="#a06a46"/><path d="M109.30000000000001 219 L114.0 214.6 L118.7 219 Z" fill="#8c5a3c"/><circle cx="114.0" cy="220.5" r="1.3" fill="#6d4632"/>
<g><rect x="32.2" y="246" width="108.2" height="20.6" fill="#b3744e"/><rect x="31.5" y="244.6" width="109.6" height="2.6" fill="#5b444c"/><rect x="44.4" y="241.5" width="2.8" height="25" fill="#c08560"/><path d="M43.9 242 L45.8 238.8 L47.699999999999996 242 Z" fill="#5b444c"/><rect x="58.6" y="241.5" width="2.8" height="25" fill="#c08560"/><path d="M58.1 242 L60.0 238.8 L61.9 242 Z" fill="#5b444c"/><rect x="74.5" y="241.5" width="2.8" height="25" fill="#c08560"/><path d="M74.0 242 L75.9 238.8 L77.8 242 Z" fill="#5b444c"/><rect x="120.6" y="241.5" width="2.8" height="25" fill="#c08560"/><path d="M120.1 242 L122.0 238.8 L123.89999999999999 242 Z" fill="#5b444c"/><rect x="36.8" y="252.3" width="1.3" height="11.5" fill="#4b3b4a"/><rect x="39.599999999999994" y="252.3" width="1.3" height="11.5" fill="#4b3b4a"/><rect x="66.4" y="252.3" width="1.3" height="11.5" fill="#4b3b4a"/><rect x="69.2" y="252.3" width="1.3" height="11.5" fill="#4b3b4a"/><rect x="129" y="252.3" width="1.3" height="11.5" fill="#4b3b4a"/><rect x="131.8" y="252.3" width="1.3" height="11.5" fill="#4b3b4a"/><path d="M86.5 247 L99.1 240.8 L111.7 247 Z" fill="#5b444c"/><rect x="87.6" y="247" width="23" height="19.6" fill="#a86a48"/><path d="M93.2 266.6 V258.5 A5.9 5.9 0 0 1 105 258.5 V266.6 Z" fill="#7a4a38"/><rect x="86.3" y="261" width="24" height="12.3" fill="#b9bab2"/><rect x="86.3" y="263.2" width="24" height="0.7" fill="#8e9088"/><rect x="86.3" y="265.6" width="24" height="0.7" fill="#8e9088"/><rect x="86.3" y="268" width="24" height="0.7" fill="#8e9088"/><rect x="86.3" y="270.4" width="24" height="0.7" fill="#8e9088"/></g>
<g><ellipse cx="26" cy="289" rx="9.5" ry="2.6" fill="#8cb545" opacity="0.8"/><rect x="18" y="261" width="6.5" height="28.5" fill="#8a8b8c"/><path d="M17.4 262 V256.5 H19.4 V258.5 H21 V256.5 H23 V258.5 H25 V262 Z" fill="#7a7b7c"/><rect x="24.5" y="270" width="9" height="19.5" fill="#97989a"/><path d="M24 270.5 V266.8 H26 V268.4 H28 V266.8 H30.5 V268.4 H32 V266.8 H34 V270.5 Z" fill="#8fb85a"/><path d="M20 289.5 V285.5 A2 2 0 0 1 24 285.5 V289.5 Z" fill="#3d3d40"/><rect x="27.5" y="275" width="2.2" height="3" fill="#5c5d60"/></g>
<rect x="149.3" y="233" width="11.6" height="23.5" fill="#8a6238"/><rect x="149.3" y="233" width="1.6" height="23.5" fill="#5e4226"/><rect x="159.3" y="233" width="1.6" height="23.5" fill="#5e4226"/><rect x="148.70000000000002" y="233" width="12.799999999999999" height="1.2" fill="#5e4226"/><rect x="148.70000000000002" y="255.3" width="12.799999999999999" height="1.2" fill="#5e4226"/><rect x="153.48" y="234.2" width="0.7" height="21.1" fill="#75522e"/><rect x="156.49" y="234.2" width="0.7" height="21.1" fill="#75522e"/>
<rect x="-1" y="92.9" width="190" height="5" fill="#e9344e"/><rect x="-1" y="92.9" width="190" height="0.7" fill="#f7a0a8" opacity="0.7"/>
<circle cx="43.3" cy="95.6" r="7.7" fill="#e9344e"/>
<text x="43.3" y="98.6" text-anchor="middle" font-family="Liberation Sans, sans-serif" font-weight="bold" font-size="8.4" fill="#fff" textLength="9.6" lengthAdjust="spacingAndGlyphs">05</text>
<rect x="-1" y="195.9" width="190" height="5.1" fill="#e9344e"/><rect x="-1" y="195.9" width="190" height="0.7" fill="#f7a0a8" opacity="0.7"/>
<circle cx="177.2" cy="198.5" r="4.6" fill="#fff" stroke="#e9344e" stroke-width="2.2"/><circle cx="-0.6" cy="198.5" r="4.6" fill="#fff" stroke="#e9344e" stroke-width="2.2"/>
<circle cx="99.1" cy="214.5" r="2.6" fill="#f0283c"/>
<circle cx="99.1" cy="223.4" r="2.6" fill="#f0283c"/>
<circle cx="99.1" cy="232.3" r="2.6" fill="#f0283c"/>
<circle cx="99.1" cy="241.3" r="2.6" fill="#f0283c"/>
<circle cx="99.1" cy="250.3" r="2.6" fill="#f0283c"/>
<circle cx="99.1" cy="259.2" r="4.2" fill="none" stroke="#e6d23c" stroke-width="1.3"/><circle cx="99.1" cy="259.2" r="5.3" fill="none" stroke="#7fb24a" stroke-width="0.9"/>
<circle cx="99.1" cy="259.2" r="2.6" fill="#f0283c"/>
<use href="#den" x="58.8" y="28.9"/>
<use href="#den" x="129.5" y="20.2"/>
<use href="#den" x="79" y="58.6"/>
<use href="#den" x="112.9" y="58.6"/>
<use href="#den" x="138.2" y="58.6"/>
<use href="#den" x="134.7" y="86"/>
<use href="#den" x="143.4" y="152.8"/>
<use href="#den" x="155.5" y="224.3"/>
<use href="#den" x="41.9" y="286.6"/>
<use href="#den" x="99.3" y="286.2"/>
<use href="#den" x="159.6" y="277.7"/>
<use href="#den" x="31.3" y="330.8"/>
<use href="#den" x="76.2" y="334.8"/>
<use href="#den" x="141.9" y="351.6"/>
<use href="#den" x="170.9" y="362.4"/>
<use href="#den" x="61.2" y="384.4"/>
<use href="#den" x="25.9" y="392.6"/>
<use href="#den" x="88.1" y="432.4"/>
<g><rect x="91.8" y="398.5" width="5" height="9.5" fill="#d9a070"/><path d="M91.2 399 L94.3 393.3 L97.4 399 Z" fill="#c06a48"/><circle cx="94.3" cy="402.3" r="1.5" fill="#f0dcc8" stroke="#b0503a" stroke-width="0.5"/><path d="M76 412 L79 406.6 H98.5 L101 412 Z" fill="#c9805a"/><rect x="77.5" y="412" width="22" height="8" fill="#c08058"/></g>
<circle cx="77.2" cy="402.2" r="5" fill="#f80d0d"/><circle cx="77.2" cy="402.2" r="0.9" fill="#7a0a0a"/>
<use href="#pin" x="129.5" y="6.8"/>
<use href="#pin" x="62.4" y="63.8"/>
<use href="#pin" x="143.4" y="139.3"/>
<use href="#pin" x="99.1" y="272.5"/>
<use href="#pin" x="88.2" y="418.8"/>
<use href="#pin" x="-1" y="184"/>
<use href="#pk" x="51.3" y="187"/>
<use href="#spin" x="58.099999999999994" y="179.9"/>
<use href="#pk" x="99.3" y="186.8"/>
<use href="#spin" x="106.1" y="179.70000000000002"/>
<g transform="translate(99.4 200.2)"><path d="M0 -10.4 L10.4 0 L0 10.4 L-10.4 0 Z" fill="#fff"/><path d="M0 -8.4 L8.4 0 L0 8.4 L-8.4 0 Z" fill="#1b2fb8"/><path d="M-4.5 -0.4 L-1.2 -3.9 H1.6 L4.5 -0.4 L0.2 4.3 Z" fill="#f4e81c"/></g>
</g></svg>
<div class="a gb" style="left:251px;top:88px;width:327px;height:585px;"></div>
<div class="a gl" style="left:257px;top:88px;width:24px;height:1px;"></div>
<div class="t" style="left:259.66px;top:81px;font-size:12.5px;transform:scaleX(0.8361)">Day</div>
<div class="a nu" style="left:290px;top:82px;width:38px;height:20px;"><i class="u"><b style="left:5px;top:2px;width:1px"></b><b style="left:4px;top:3px;width:3px"></b><b style="left:3px;top:4px;width:5px"></b></i><i class="w"><b style="left:3px;top:1px;width:5px"></b><b style="left:4px;top:2px;width:3px"></b><b style="left:5px;top:3px;width:1px"></b></i></div>
<div class="t" style="left:292.20px;top:83px;font-size:12.5px;transform:scaleX(0.8000)">4</div>
<div class="a gb" style="left:255px;top:112px;width:316px;height:171px;"></div>
<div class="a gl" style="left:262px;top:112px;width:30px;height:1px;"></div>
<div class="t" style="left:264.75px;top:105px;font-size:12.5px;transform:scaleX(0.8041)">1-3IV</div>
<div class="t" style="left:269.65px;top:130px;font-size:12.5px;transform:scaleX(0.8473)">Pokémon</div>
<div class="a cb" style="left:348px;top:130px;width:130px;height:21px;"></div>
<svg class="a" style="left:463px;top:137px" width="12" height="8" viewBox="0 0 12 8"><path d="M2 1.6 L6 5.5 L10 1.6" fill="none" stroke="#3c3c3c" stroke-width="0.95"/></svg>
<div class="t" style="left:351.67px;top:133px;font-size:12.5px;transform:scaleX(0.8264)">Milcery (G-Max) 3★ (3I</div>
<div class="t" style="left:269.65px;top:163px;font-size:12.5px;transform:scaleX(0.8471)">Nature</div>
<div class="a cb" style="left:348px;top:161px;width:130px;height:21px;"></div>
<svg class="a" style="left:463px;top:168px" width="12" height="8" viewBox="0 0 12 8"><path d="M2 1.6 L6 5.5 L10 1.6" fill="none" stroke="#3c3c3c" stroke-width="0.95"/></svg>
<div class="t" style="left:351.65px;top:164px;font-size:12.5px;transform:scaleX(0.8455)">Bashful</div>
<div class="t" style="left:270.00px;top:195px;font-size:12.5px;transform:scaleX(0.7873)">Ability</div>
<div class="a cb" style="left:348px;top:193px;width:130px;height:21px;"></div>
<svg class="a" style="left:463px;top:200px" width="12" height="8" viewBox="0 0 12 8"><path d="M2 1.6 L6 5.5 L10 1.6" fill="none" stroke="#3c3c3c" stroke-width="0.95"/></svg>
<div class="t" style="left:352.02px;top:196px;font-size:12.5px;transform:scaleX(0.8461)">Sweet Veil</div>
<div class="t" style="left:269.48px;top:228px;font-size:12.5px;transform:scaleX(0.8347)">Characteristic</div>
<div class="a cb" style="left:348px;top:225px;width:130px;height:21px;"></div>
<svg class="a" style="left:463px;top:232px" width="12" height="8" viewBox="0 0 12 8"><path d="M2 1.6 L6 5.5 L10 1.6" fill="none" stroke="#3c3c3c" stroke-width="0.95"/></svg>
<div class="t" style="left:352.00px;top:228px;font-size:12.5px;transform:scaleX(0.8367)">Alert to sounds.</div>
<div class="t" style="left:484.00px;top:127px;font-size:12.5px;transform:scaleX(0.8750)">HP</div>
<div class="a nu" style="left:526px;top:123px;width:38px;height:20px;"><i class="u"><b style="left:5px;top:2px;width:1px"></b><b style="left:4px;top:3px;width:3px"></b><b style="left:3px;top:4px;width:5px"></b></i><i class="w"><b style="left:3px;top:1px;width:5px"></b><b style="left:4px;top:2px;width:3px"></b><b style="left:5px;top:3px;width:1px"></b></i></div>
<div class="t" style="left:527.91px;top:124px;font-size:12.5px;transform:scaleX(0.7800)">31</div>
<div class="t" style="left:484.00px;top:146px;font-size:12.5px;transform:scaleX(0.9015)">ATK</div>
<div class="a nu" style="left:526px;top:143px;width:38px;height:20px;"><i class="u"><b style="left:5px;top:2px;width:1px"></b><b style="left:4px;top:3px;width:3px"></b><b style="left:3px;top:4px;width:5px"></b></i><i class="w"><b style="left:3px;top:1px;width:5px"></b><b style="left:4px;top:2px;width:3px"></b><b style="left:5px;top:3px;width:1px"></b></i></div>
<div class="t" style="left:528.52px;top:144px;font-size:12.5px;transform:scaleX(0.7800)">17</div>
<div class="t" style="left:484.00px;top:167px;font-size:12.5px;transform:scaleX(0.8173)">DEF</div>
<div class="a nu" style="left:526px;top:164px;width:38px;height:20px;"><i class="u"><b style="left:5px;top:2px;width:1px"></b><b style="left:4px;top:3px;width:3px"></b><b style="left:3px;top:4px;width:5px"></b></i><i class="w"><b style="left:3px;top:1px;width:5px"></b><b style="left:4px;top:2px;width:3px"></b><b style="left:5px;top:3px;width:1px"></b></i></div>
<div class="t" style="left:528.52px;top:165px;font-size:12.5px;transform:scaleX(0.7800)">1</div>
<div class="t" style="left:484.00px;top:187px;font-size:12.5px;transform:scaleX(0.8701)">SPA</div>
<div class="a nu" style="left:526px;top:185px;width:38px;height:20px;"><i class="u"><b style="left:5px;top:2px;width:1px"></b><b style="left:4px;top:3px;width:3px"></b><b style="left:3px;top:4px;width:5px"></b></i><i class="w"><b style="left:3px;top:1px;width:5px"></b><b style="left:4px;top:2px;width:3px"></b><b style="left:5px;top:3px;width:1px"></b></i></div>
<div class="t" style="left:528.52px;top:186px;font-size:12.5px;transform:scaleX(0.7800)">10</div>
<div class="t" style="left:484.00px;top:207px;font-size:12.5px;transform:scaleX(0.8350)">SPD</div>
<div class="a nu" style="left:526px;top:204px;width:38px;height:20px;"><i class="u"><b style="left:5px;top:2px;width:1px"></b><b style="left:4px;top:3px;width:3px"></b><b style="left:3px;top:4px;width:5px"></b></i><i class="w"><b style="left:3px;top:1px;width:5px"></b><b style="left:4px;top:2px;width:3px"></b><b style="left:5px;top:3px;width:1px"></b></i></div>
<div class="t" style="left:527.91px;top:205px;font-size:12.5px;transform:scaleX(0.7800)">31</div>
<div class="t" style="left:484.00px;top:228px;font-size:12.5px;transform:scaleX(0.8192)">SPE</div>
<div class="a nu" style="left:526px;top:225px;width:38px;height:20px;"><i class="u"><b style="left:5px;top:2px;width:1px"></b><b style="left:4px;top:3px;width:3px"></b><b style="left:3px;top:4px;width:5px"></b></i><i class="w"><b style="left:3px;top:1px;width:5px"></b><b style="left:4px;top:2px;width:3px"></b><b style="left:5px;top:3px;width:1px"></b></i></div>
<div class="t" style="left:527.91px;top:226px;font-size:12.5px;transform:scaleX(0.7800)">31</div>
<div class="a bt" style="left:270px;top:254px;width:206px;height:17px;"></div>
<div class="t" style="left:346.69px;top:256px;font-size:12.5px;transform:scaleX(0.8966)">Check Ivs</div>
<div class="a bt" style="left:486px;top:254px;width:77px;height:17px;"></div>
<div class="t" style="left:506.24px;top:256px;font-size:12.5px;transform:scaleX(0.8571)">IV Calc</div>
<div class="a gb" style="left:255px;top:317px;width:316px;height:163px;"></div>
<div class="a gl" style="left:261px;top:317px;width:42px;height:1px;"></div>
<div class="t" style="left:264.27px;top:309px;font-size:12.5px;transform:scaleX(0.9138);color:#6d6d6d">4IV 3/6</div>
<div class="t" style="left:269.65px;top:338px;font-size:12.5px;transform:scaleX(0.8473);color:#8c8c8c">Pokémon</div>
<div class="a cb d" style="left:348px;top:338px;width:130px;height:21px;"></div>
<svg class="a" style="left:463px;top:345px" width="12" height="8" viewBox="0 0 12 8"><path d="M2 1.6 L6 5.5 L10 1.6" fill="none" stroke="#8e8e8e" stroke-width="0.95"/></svg>
<div class="t" style="left:269.65px;top:371px;font-size:12.5px;transform:scaleX(0.8471);color:#8c8c8c">Nature</div>
<div class="a cb d" style="left:348px;top:369px;width:130px;height:21px;"></div>
<svg class="a" style="left:463px;top:376px" width="12" height="8" viewBox="0 0 12 8"><path d="M2 1.6 L6 5.5 L10 1.6" fill="none" stroke="#8e8e8e" stroke-width="0.95"/></svg>
<div class="t" style="left:351.90px;top:372px;font-size:12.5px;transform:scaleX(0.8101);color:#565656">Adamant</div>
<div class="t" style="left:270.00px;top:403px;font-size:12.5px;transform:scaleX(0.7873);color:#8c8c8c">Ability</div>
<div class="a cb d" style="left:348px;top:401px;width:130px;height:21px;"></div>
<svg class="a" style="left:463px;top:408px" width="12" height="8" viewBox="0 0 12 8"><path d="M2 1.6 L6 5.5 L10 1.6" fill="none" stroke="#8e8e8e" stroke-width="0.95"/></svg>
<div class="t" style="left:269.48px;top:436px;font-size:12.5px;transform:scaleX(0.8347);color:#8c8c8c">Characteristic</div>
<div class="a cb d" style="left:348px;top:434px;width:130px;height:21px;"></div>
<svg class="a" style="left:463px;top:441px" width="12" height="8" viewBox="0 0 12 8"><path d="M2 1.6 L6 5.5 L10 1.6" fill="none" stroke="#8e8e8e" stroke-width="0.95"/></svg>
<div class="t" style="left:351.67px;top:437px;font-size:12.5px;transform:scaleX(0.8828);color:#565656">Unknown</div>
<div class="t" style="left:484.00px;top:335px;font-size:12.5px;transform:scaleX(0.8750);color:#a0a0a0">HP</div>
<div class="a nu d" style="left:526px;top:331px;width:38px;height:20px;"><i class="u"><b style="left:5px;top:2px;width:1px"></b><b style="left:4px;top:3px;width:3px"></b><b style="left:3px;top:4px;width:5px"></b></i><i class="w"><b style="left:3px;top:1px;width:5px"></b><b style="left:4px;top:2px;width:3px"></b><b style="left:5px;top:3px;width:1px"></b></i></div>
<div class="t" style="left:527.91px;top:332px;font-size:12.5px;transform:scaleX(0.7800);color:#6d6d6d">31</div>
<div class="t" style="left:484.00px;top:355px;font-size:12.5px;transform:scaleX(0.9015);color:#a0a0a0">ATK</div>
<div class="a nu d" style="left:526px;top:351px;width:38px;height:20px;"><i class="u"><b style="left:5px;top:2px;width:1px"></b><b style="left:4px;top:3px;width:3px"></b><b style="left:3px;top:4px;width:5px"></b></i><i class="w"><b style="left:3px;top:1px;width:5px"></b><b style="left:4px;top:2px;width:3px"></b><b style="left:5px;top:3px;width:1px"></b></i></div>
<div class="t" style="left:527.91px;top:352px;font-size:12.5px;transform:scaleX(0.7800);color:#6d6d6d">31</div>
<div class="t" style="left:484.00px;top:375px;font-size:12.5px;transform:scaleX(0.8173);color:#a0a0a0">DEF</div>
<div class="a nu d" style="left:526px;top:372px;width:38px;height:20px;"><i class="u"><b style="left:5px;top:2px;width:1px"></b><b style="left:4px;top:3px;width:3px"></b><b style="left:3px;top:4px;width:5px"></b></i><i class="w"><b style="left:3px;top:1px;width:5px"></b><b style="left:4px;top:2px;width:3px"></b><b style="left:5px;top:3px;width:1px"></b></i></div>
<div class="t" style="left:528.52px;top:373px;font-size:12.5px;transform:scaleX(0.7800);color:#6d6d6d">1</div>
<div class="t" style="left:484.00px;top:395px;font-size:12.5px;transform:scaleX(0.8701);color:#a0a0a0">SPA</div>
<div class="a nu d" style="left:526px;top:393px;width:38px;height:20px;"><i class="u"><b style="left:5px;top:2px;width:1px"></b><b style="left:4px;top:3px;width:3px"></b><b style="left:3px;top:4px;width:5px"></b></i><i class="w"><b style="left:3px;top:1px;width:5px"></b><b style="left:4px;top:2px;width:3px"></b><b style="left:5px;top:3px;width:1px"></b></i></div>
<div class="t" style="left:528.52px;top:394px;font-size:12.5px;transform:scaleX(0.7800);color:#6d6d6d">10</div>
<div class="t" style="left:484.00px;top:415px;font-size:12.5px;transform:scaleX(0.8350);color:#a0a0a0">SPD</div>
<div class="a nu d" style="left:526px;top:412px;width:38px;height:20px;"><i class="u"><b style="left:5px;top:2px;width:1px"></b><b style="left:4px;top:3px;width:3px"></b><b style="left:3px;top:4px;width:5px"></b></i><i class="w"><b style="left:3px;top:1px;width:5px"></b><b style="left:4px;top:2px;width:3px"></b><b style="left:5px;top:3px;width:1px"></b></i></div>
<div class="t" style="left:527.91px;top:413px;font-size:12.5px;transform:scaleX(0.7800);color:#6d6d6d">31</div>
<div class="t" style="left:484.00px;top:436px;font-size:12.5px;transform:scaleX(0.8192);color:#a0a0a0">SPE</div>
<div class="a nu d" style="left:526px;top:434px;width:38px;height:20px;"><i class="u"><b style="left:5px;top:2px;width:1px"></b><b style="left:4px;top:3px;width:3px"></b><b style="left:3px;top:4px;width:5px"></b></i><i class="w"><b style="left:3px;top:1px;width:5px"></b><b style="left:4px;top:2px;width:3px"></b><b style="left:5px;top:3px;width:1px"></b></i></div>
<div class="t" style="left:527.91px;top:435px;font-size:12.5px;transform:scaleX(0.7800);color:#6d6d6d">31</div>
<div class="a bt d" style="left:270px;top:459px;width:206px;height:17px;"></div>
<div class="t" style="left:345.23px;top:461px;font-size:12.5px;transform:scaleX(0.8248);color:#9a9a9a">Confirm Ivs</div>
<div class="a bt d" style="left:486px;top:457px;width:77px;height:17px;"></div>
<div class="t" style="left:506.24px;top:459px;font-size:12.5px;transform:scaleX(0.8571);color:#9a9a9a">IV Calc</div>
<div class="a gb" style="left:255px;top:506px;width:316px;height:163px;"></div>
<div class="a gl" style="left:261px;top:506px;width:59px;height:1px;"></div>
<div class="t" style="left:264.05px;top:499px;font-size:12.5px;transform:scaleX(0.9068);color:#f5a11c">5IV 4/6</div>
<svg class="a" style="left:305px;top:500px" width="13" height="13" viewBox="0 0 13 13"><circle cx="6.5" cy="6.5" r="5.9" fill="#fff" stroke="#333" stroke-width="1.1"/><circle cx="6.5" cy="6.5" r="3.1" fill="#333"/></svg>
<div class="t" style="left:269.65px;top:524px;font-size:12.5px;transform:scaleX(0.8473)">Pokémon</div>
<div class="a cb" style="left:348px;top:524px;width:130px;height:21px;"></div>
<svg class="a" style="left:463px;top:531px" width="12" height="8" viewBox="0 0 12 8"><path d="M2 1.6 L6 5.5 L10 1.6" fill="none" stroke="#3c3c3c" stroke-width="0.95"/></svg>
<div class="t" style="left:351.67px;top:527px;font-size:12.5px;transform:scaleX(0.8276)">Milcery (G-Max) 5★</div>
<div class="t" style="left:269.65px;top:557px;font-size:12.5px;transform:scaleX(0.8471)">Nature</div>
<div class="a cb" style="left:348px;top:555px;width:130px;height:21px;"></div>
<svg class="a" style="left:463px;top:562px" width="12" height="8" viewBox="0 0 12 8"><path d="M2 1.6 L6 5.5 L10 1.6" fill="none" stroke="#3c3c3c" stroke-width="0.95"/></svg>
<div class="t" style="left:351.90px;top:558px;font-size:12.5px;transform:scaleX(0.8101)">Adamant</div>
<div class="t" style="left:270.00px;top:589px;font-size:12.5px;transform:scaleX(0.7873)">Ability</div>
<div class="a cb" style="left:348px;top:587px;width:130px;height:21px;"></div>
<svg class="a" style="left:463px;top:594px" width="12" height="8" viewBox="0 0 12 8"><path d="M2 1.6 L6 5.5 L10 1.6" fill="none" stroke="#3c3c3c" stroke-width="0.95"/></svg>
<div class="t" style="left:352.00px;top:590px;font-size:12.5px;transform:scaleX(0.8256)">Aroma Veil (H)</div>
<div class="t" style="left:269.48px;top:622px;font-size:12.5px;transform:scaleX(0.8347)">Characteristic</div>
<div class="a cb" style="left:348px;top:619px;width:130px;height:21px;"></div>
<svg class="a" style="left:463px;top:626px" width="12" height="8" viewBox="0 0 12 8"><path d="M2 1.6 L6 5.5 L10 1.6" fill="none" stroke="#3c3c3c" stroke-width="0.95"/></svg>
<div class="t" style="left:350.96px;top:622px;font-size:12.5px;transform:scaleX(0.8609)">Capable of taking hits.</div>
<div class="t" style="left:484.00px;top:520px;font-size:12.5px;transform:scaleX(0.8750)">HP</div>
<div class="a nu" style="left:526px;top:517px;width:38px;height:20px;"><i class="u"><b style="left:5px;top:2px;width:1px"></b><b style="left:4px;top:3px;width:3px"></b><b style="left:3px;top:4px;width:5px"></b></i><i class="w"><b style="left:3px;top:1px;width:5px"></b><b style="left:4px;top:2px;width:3px"></b><b style="left:5px;top:3px;width:1px"></b></i></div>
<div class="t" style="left:527.91px;top:518px;font-size:12.5px;transform:scaleX(0.7800)">31</div>
<div class="t" style="left:484.00px;top:540px;font-size:12.5px;transform:scaleX(0.9015)">ATK</div>
<div class="a nu" style="left:526px;top:537px;width:38px;height:20px;"><i class="u"><b style="left:5px;top:2px;width:1px"></b><b style="left:4px;top:3px;width:3px"></b><b style="left:3px;top:4px;width:5px"></b></i><i class="w"><b style="left:3px;top:1px;width:5px"></b><b style="left:4px;top:2px;width:3px"></b><b style="left:5px;top:3px;width:1px"></b></i></div>
<div class="t" style="left:527.91px;top:538px;font-size:12.5px;transform:scaleX(0.7800)">31</div>
<div class="t" style="left:484.00px;top:560px;font-size:12.5px;transform:scaleX(0.8173)">DEF</div>
<div class="a nu" style="left:526px;top:558px;width:38px;height:20px;"><i class="u"><b style="left:5px;top:2px;width:1px"></b><b style="left:4px;top:3px;width:3px"></b><b style="left:3px;top:4px;width:5px"></b></i><i class="w"><b style="left:3px;top:1px;width:5px"></b><b style="left:4px;top:2px;width:3px"></b><b style="left:5px;top:3px;width:1px"></b></i></div>
<div class="t" style="left:527.91px;top:559px;font-size:12.5px;transform:scaleX(0.7800)">31</div>
<div class="t" style="left:484.00px;top:580px;font-size:12.5px;transform:scaleX(0.8701)">SPA</div>
<div class="a nu" style="left:526px;top:579px;width:38px;height:20px;"><i class="u"><b style="left:5px;top:2px;width:1px"></b><b style="left:4px;top:3px;width:3px"></b><b style="left:3px;top:4px;width:5px"></b></i><i class="w"><b style="left:3px;top:1px;width:5px"></b><b style="left:4px;top:2px;width:3px"></b><b style="left:5px;top:3px;width:1px"></b></i></div>
<div class="t" style="left:527.76px;top:580px;font-size:12.5px;transform:scaleX(0.7800)">28</div>
<div class="t" style="left:484.00px;top:600px;font-size:12.5px;transform:scaleX(0.8350)">SPD</div>
<div class="a nu" style="left:526px;top:598px;width:38px;height:20px;"><i class="u"><b style="left:5px;top:2px;width:1px"></b><b style="left:4px;top:3px;width:3px"></b><b style="left:3px;top:4px;width:5px"></b></i><i class="w"><b style="left:3px;top:1px;width:5px"></b><b style="left:4px;top:2px;width:3px"></b><b style="left:5px;top:3px;width:1px"></b></i></div>
<div class="t" style="left:527.91px;top:599px;font-size:12.5px;transform:scaleX(0.7800)">31</div>
<div class="t" style="left:484.00px;top:621px;font-size:12.5px;transform:scaleX(0.8192)">SPE</div>
<div class="a nu" style="left:526px;top:619px;width:38px;height:20px;"><i class="u"><b style="left:5px;top:2px;width:1px"></b><b style="left:4px;top:3px;width:3px"></b><b style="left:3px;top:4px;width:5px"></b></i><i class="w"><b style="left:3px;top:1px;width:5px"></b><b style="left:4px;top:2px;width:3px"></b><b style="left:5px;top:3px;width:1px"></b></i></div>
<div class="t" style="left:527.91px;top:620px;font-size:12.5px;transform:scaleX(0.7800)">31</div>
<div class="a bt" style="left:270px;top:644px;width:206px;height:17px;"></div>
<div class="t" style="left:345.23px;top:646px;font-size:12.5px;transform:scaleX(0.8248)">Confirm Ivs</div>
<div class="a bt" style="left:486px;top:644px;width:77px;height:17px;"></div>
<div class="t" style="left:506.24px;top:646px;font-size:12.5px;transform:scaleX(0.8571)">IV Calc</div>
<div class="a gb" style="left:585px;top:88px;width:316px;height:195px;"></div>
<div class="a gl" style="left:591px;top:88px;width:24px;height:1px;"></div>
<div class="t" style="left:593.65px;top:81px;font-size:12.5px;transform:scaleX(0.8479)">Day</div>
<div class="a nu" style="left:624px;top:82px;width:38px;height:20px;"><i class="u"><b style="left:5px;top:2px;width:1px"></b><b style="left:4px;top:3px;width:3px"></b><b style="left:3px;top:4px;width:5px"></b></i><i class="w"><b style="left:3px;top:1px;width:5px"></b><b style="left:4px;top:2px;width:3px"></b><b style="left:5px;top:3px;width:1px"></b></i></div>
<div class="t" style="left:626.00px;top:83px;font-size:12.5px;transform:scaleX(0.8000)">5</div>
<div class="t" style="left:599.65px;top:131px;font-size:12.5px;transform:scaleX(0.8473)">Pokémon</div>
<div class="a cb" style="left:678px;top:130px;width:130px;height:21px;"></div>
<svg class="a" style="left:793px;top:137px" width="12" height="8" viewBox="0 0 12 8"><path d="M2 1.6 L6 5.5 L10 1.6" fill="none" stroke="#3c3c3c" stroke-width="0.95"/></svg>
<div class="t" style="left:681.67px;top:133px;font-size:12.5px;transform:scaleX(0.8284)">Milcery (G-Max) 4★ (4I</div>
<div class="t" style="left:599.65px;top:163px;font-size:12.5px;transform:scaleX(0.8471)">Nature</div>
<div class="a cb" style="left:678px;top:162px;width:130px;height:21px;"></div>
<svg class="a" style="left:793px;top:169px" width="12" height="8" viewBox="0 0 12 8"><path d="M2 1.6 L6 5.5 L10 1.6" fill="none" stroke="#3c3c3c" stroke-width="0.95"/></svg>
<div class="t" style="left:681.50px;top:165px;font-size:12.5px;transform:scaleX(0.7926)">Calm</div>
<div class="t" style="left:600.00px;top:195px;font-size:12.5px;transform:scaleX(0.7873)">Ability</div>
<div class="a cb" style="left:678px;top:193px;width:130px;height:21px;"></div>
<svg class="a" style="left:793px;top:200px" width="12" height="8" viewBox="0 0 12 8"><path d="M2 1.6 L6 5.5 L10 1.6" fill="none" stroke="#3c3c3c" stroke-width="0.95"/></svg>
<div class="t" style="left:682.00px;top:196px;font-size:12.5px;transform:scaleX(0.8256)">Aroma Veil (H)</div>
<div class="t" style="left:599.48px;top:228px;font-size:12.5px;transform:scaleX(0.8347)">Characteristic</div>
<div class="a cb" style="left:678px;top:225px;width:130px;height:21px;"></div>
<svg class="a" style="left:793px;top:232px" width="12" height="8" viewBox="0 0 12 8"><path d="M2 1.6 L6 5.5 L10 1.6" fill="none" stroke="#3c3c3c" stroke-width="0.95"/></svg>
<div class="t" style="left:682.00px;top:228px;font-size:12.5px;transform:scaleX(0.8367)">Alert to sounds.</div>
<div class="t" style="left:814.00px;top:127px;font-size:12.5px;transform:scaleX(0.8750)">HP</div>
<div class="a nu" style="left:856px;top:123px;width:38px;height:20px;"><i class="u"><b style="left:5px;top:2px;width:1px"></b><b style="left:4px;top:3px;width:3px"></b><b style="left:3px;top:4px;width:5px"></b></i><i class="w"><b style="left:3px;top:1px;width:5px"></b><b style="left:4px;top:2px;width:3px"></b><b style="left:5px;top:3px;width:1px"></b></i></div>
<div class="t" style="left:857.91px;top:124px;font-size:12.5px;transform:scaleX(0.7800)">0</div>
<div class="t" style="left:814.00px;top:147px;font-size:12.5px;transform:scaleX(0.9015)">ATK</div>
<div class="a nu" style="left:856px;top:144px;width:38px;height:20px;"><i class="u"><b style="left:5px;top:2px;width:1px"></b><b style="left:4px;top:3px;width:3px"></b><b style="left:3px;top:4px;width:5px"></b></i><i class="w"><b style="left:3px;top:1px;width:5px"></b><b style="left:4px;top:2px;width:3px"></b><b style="left:5px;top:3px;width:1px"></b></i></div>
<div class="t" style="left:857.91px;top:145px;font-size:12.5px;transform:scaleX(0.7800)">31</div>
<div class="t" style="left:814.00px;top:167px;font-size:12.5px;transform:scaleX(0.8173)">DEF</div>
<div class="a nu" style="left:856px;top:164px;width:38px;height:20px;"><i class="u"><b style="left:5px;top:2px;width:1px"></b><b style="left:4px;top:3px;width:3px"></b><b style="left:3px;top:4px;width:5px"></b></i><i class="w"><b style="left:3px;top:1px;width:5px"></b><b style="left:4px;top:2px;width:3px"></b><b style="left:5px;top:3px;width:1px"></b></i></div>
<div class="t" style="left:857.91px;top:165px;font-size:12.5px;transform:scaleX(0.7800)">31</div>
<div class="t" style="left:814.00px;top:187px;font-size:12.5px;transform:scaleX(0.8701)">SPA</div>
<div class="a nu" style="left:856px;top:185px;width:38px;height:20px;"><i class="u"><b style="left:5px;top:2px;width:1px"></b><b style="left:4px;top:3px;width:3px"></b><b style="left:3px;top:4px;width:5px"></b></i><i class="w"><b style="left:3px;top:1px;width:5px"></b><b style="left:4px;top:2px;width:3px"></b><b style="left:5px;top:3px;width:1px"></b></i></div>
<div class="t" style="left:857.76px;top:186px;font-size:12.5px;transform:scaleX(0.7800)">25</div>
<div class="t" style="left:814.00px;top:207px;font-size:12.5px;transform:scaleX(0.8350)">SPD</div>
<div class="a nu" style="left:856px;top:205px;width:38px;height:20px;"><i class="u"><b style="left:5px;top:2px;width:1px"></b><b style="left:4px;top:3px;width:3px"></b><b style="left:3px;top:4px;width:5px"></b></i><i class="w"><b style="left:3px;top:1px;width:5px"></b><b style="left:4px;top:2px;width:3px"></b><b style="left:5px;top:3px;width:1px"></b></i></div>
<div class="t" style="left:857.91px;top:206px;font-size:12.5px;transform:scaleX(0.7800)">31</div>
<div class="t" style="left:814.00px;top:227px;font-size:12.5px;transform:scaleX(0.8192)">SPE</div>
<div class="a nu" style="left:856px;top:225px;width:38px;height:20px;"><i class="u"><b style="left:5px;top:2px;width:1px"></b><b style="left:4px;top:3px;width:3px"></b><b style="left:3px;top:4px;width:5px"></b></i><i class="w"><b style="left:3px;top:1px;width:5px"></b><b style="left:4px;top:2px;width:3px"></b><b style="left:5px;top:3px;width:1px"></b></i></div>
<div class="t" style="left:857.91px;top:226px;font-size:12.5px;transform:scaleX(0.7800)">31</div>
<div class="a bt" style="left:816px;top:254px;width:77px;height:17px;"></div>
<div class="t" style="left:836.24px;top:256px;font-size:12.5px;transform:scaleX(0.8571)">IV Calc</div>
<div class="a gb" style="left:585px;top:317px;width:316px;height:163px;"></div>
<div class="a gl" style="left:591px;top:317px;width:24px;height:1px;"></div>
<div class="t" style="left:593.65px;top:309px;font-size:12.5px;transform:scaleX(0.8479)">Day</div>
<div class="a nu" style="left:624px;top:310px;width:38px;height:20px;"><i class="u"><b style="left:5px;top:2px;width:1px"></b><b style="left:4px;top:3px;width:3px"></b><b style="left:3px;top:4px;width:5px"></b></i><i class="w"><b style="left:3px;top:1px;width:5px"></b><b style="left:4px;top:2px;width:3px"></b><b style="left:5px;top:3px;width:1px"></b></i></div>
<div class="t" style="left:625.90px;top:311px;font-size:12.5px;transform:scaleX(0.8000)">6</div>
<div class="t" style="left:599.65px;top:338px;font-size:12.5px;transform:scaleX(0.8473)">Pokémon</div>
<div class="a cb" style="left:678px;top:338px;width:130px;height:21px;"></div>
<svg class="a" style="left:793px;top:345px" width="12" height="8" viewBox="0 0 12 8"><path d="M2 1.6 L6 5.5 L10 1.6" fill="none" stroke="#3c3c3c" stroke-width="0.95"/></svg>
<div class="t" style="left:681.67px;top:341px;font-size:12.5px;transform:scaleX(0.8264)">Milcery (G-Max) 3★ (3I</div>
<div class="t" style="left:599.65px;top:371px;font-size:12.5px;transform:scaleX(0.8471)">Nature</div>
<div class="a cb" style="left:678px;top:369px;width:130px;height:21px;"></div>
<svg class="a" style="left:793px;top:376px" width="12" height="8" viewBox="0 0 12 8"><path d="M2 1.6 L6 5.5 L10 1.6" fill="none" stroke="#3c3c3c" stroke-width="0.95"/></svg>
<div class="t" style="left:681.86px;top:372px;font-size:12.5px;transform:scaleX(0.7656)">Jolly</div>
<div class="t" style="left:600.00px;top:403px;font-size:12.5px;transform:scaleX(0.7873)">Ability</div>
<div class="a cb" style="left:678px;top:401px;width:130px;height:21px;"></div>
<svg class="a" style="left:793px;top:408px" width="12" height="8" viewBox="0 0 12 8"><path d="M2 1.6 L6 5.5 L10 1.6" fill="none" stroke="#3c3c3c" stroke-width="0.95"/></svg>
<div class="t" style="left:682.02px;top:404px;font-size:12.5px;transform:scaleX(0.8461)">Sweet Veil</div>
<div class="t" style="left:599.48px;top:436px;font-size:12.5px;transform:scaleX(0.8347)">Characteristic</div>
<div class="a cb" style="left:678px;top:434px;width:130px;height:21px;"></div>
<svg class="a" style="left:793px;top:441px" width="12" height="8" viewBox="0 0 12 8"><path d="M2 1.6 L6 5.5 L10 1.6" fill="none" stroke="#3c3c3c" stroke-width="0.95"/></svg>
<div class="t" style="left:681.63px;top:437px;font-size:12.5px;transform:scaleX(0.8696)">Mischievous.</div>
<div class="t" style="left:814.00px;top:335px;font-size:12.5px;transform:scaleX(0.8750)">HP</div>
<div class="a nu" style="left:856px;top:331px;width:38px;height:20px;"><i class="u"><b style="left:5px;top:2px;width:1px"></b><b style="left:4px;top:3px;width:3px"></b><b style="left:3px;top:4px;width:5px"></b></i><i class="w"><b style="left:3px;top:1px;width:5px"></b><b style="left:4px;top:2px;width:3px"></b><b style="left:5px;top:3px;width:1px"></b></i></div>
<div class="t" style="left:857.76px;top:332px;font-size:12.5px;transform:scaleX(0.7800)">2</div>
<div class="t" style="left:814.00px;top:355px;font-size:12.5px;transform:scaleX(0.9015)">ATK</div>
<div class="a nu" style="left:856px;top:351px;width:38px;height:20px;"><i class="u"><b style="left:5px;top:2px;width:1px"></b><b style="left:4px;top:3px;width:3px"></b><b style="left:3px;top:4px;width:5px"></b></i><i class="w"><b style="left:3px;top:1px;width:5px"></b><b style="left:4px;top:2px;width:3px"></b><b style="left:5px;top:3px;width:1px"></b></i></div>
<div class="t" style="left:857.91px;top:352px;font-size:12.5px;transform:scaleX(0.7800)">31</div>
<div class="t" style="left:814.00px;top:375px;font-size:12.5px;transform:scaleX(0.8173)">DEF</div>
<div class="a nu" style="left:856px;top:372px;width:38px;height:20px;"><i class="u"><b style="left:5px;top:2px;width:1px"></b><b style="left:4px;top:3px;width:3px"></b><b style="left:3px;top:4px;width:5px"></b></i><i class="w"><b style="left:3px;top:1px;width:5px"></b><b style="left:4px;top:2px;width:3px"></b><b style="left:5px;top:3px;width:1px"></b></i></div>
<div class="t" style="left:857.91px;top:373px;font-size:12.5px;transform:scaleX(0.7800)">31</div>
<div class="t" style="left:814.00px;top:395px;font-size:12.5px;transform:scaleX(0.8701)">SPA</div>
<div class="a nu" style="left:856px;top:393px;width:38px;height:20px;"><i class="u"><b style="left:5px;top:2px;width:1px"></b><b style="left:4px;top:3px;width:3px"></b><b style="left:3px;top:4px;width:5px"></b></i><i class="w"><b style="left:3px;top:1px;width:5px"></b><b style="left:4px;top:2px;width:3px"></b><b style="left:5px;top:3px;width:1px"></b></i></div>
<div class="t" style="left:857.91px;top:394px;font-size:12.5px;transform:scaleX(0.7800)">31</div>
<div class="t" style="left:814.00px;top:415px;font-size:12.5px;transform:scaleX(0.8350)">SPD</div>
<div class="a nu" style="left:856px;top:412px;width:38px;height:20px;"><i class="u"><b style="left:5px;top:2px;width:1px"></b><b style="left:4px;top:3px;width:3px"></b><b style="left:3px;top:4px;width:5px"></b></i><i class="w"><b style="left:3px;top:1px;width:5px"></b><b style="left:4px;top:2px;width:3px"></b><b style="left:5px;top:3px;width:1px"></b></i></div>
<div class="t" style="left:857.76px;top:413px;font-size:12.5px;transform:scaleX(0.7800)">2</div>
<div class="t" style="left:814.00px;top:436px;font-size:12.5px;transform:scaleX(0.8192)">SPE</div>
<div class="a nu" style="left:856px;top:434px;width:38px;height:20px;"><i class="u"><b style="left:5px;top:2px;width:1px"></b><b style="left:4px;top:3px;width:3px"></b><b style="left:3px;top:4px;width:5px"></b></i><i class="w"><b style="left:3px;top:1px;width:5px"></b><b style="left:4px;top:2px;width:3px"></b><b style="left:5px;top:3px;width:1px"></b></i></div>
<div class="t" style="left:857.76px;top:435px;font-size:12.5px;transform:scaleX(0.7800)">27</div>
<div class="a bt" style="left:816px;top:459px;width:77px;height:17px;"></div>
<div class="t" style="left:836.24px;top:461px;font-size:12.5px;transform:scaleX(0.8571)">IV Calc</div>
<div class="a gb" style="left:585px;top:506px;width:316px;height:168px;"></div>
<div class="a gl" style="left:591px;top:506px;width:43px;height:1px;"></div>
<div class="t" style="left:592.73px;top:499px;font-size:12.5px;transform:scaleX(0.8355)">Controls</div>
<div class="a " style="left:589px;top:519px;width:305px;height:20px;background:#f0f0f0;border:1px solid #7a7a7a"></div>
<div class="a bt" style="left:590px;top:549px;width:300px;height:22px;"></div>
<div class="t" style="left:709.77px;top:552px;font-size:12.5px;transform:scaleX(0.8474)">Start Search</div>
<div class="a bt" style="left:590px;top:580px;width:300px;height:22px;"></div>
<div class="t" style="left:709.63px;top:583px;font-size:12.5px;transform:scaleX(0.8670)">New Search</div>
<div class="a bt" style="left:590px;top:611px;width:300px;height:22px;"></div>
<div class="t" style="left:704.77px;top:614px;font-size:12.5px;transform:scaleX(0.8600)">Seed Checker</div>
<div class="t" style="left:591.97px;top:644px;font-size:12.5px;transform:scaleX(0.8539)">Calculation Range</div>
<div class="a nu" style="left:692px;top:643px;width:90px;height:20px;"><i class="u"><b style="left:5px;top:2px;width:1px"></b><b style="left:4px;top:3px;width:3px"></b><b style="left:3px;top:4px;width:5px"></b></i><i class="w"><b style="left:3px;top:1px;width:5px"></b><b style="left:4px;top:2px;width:3px"></b><b style="left:5px;top:3px;width:1px"></b></i></div>
<div class="t" style="left:694.15px;top:644px;font-size:12.5px;transform:scaleX(0.8000)">0</div>
<div class="t" style="left:790.55px;top:644px;font-size:12.5px;transform:scaleX(0.9000)">-</div>
<div class="a nu" style="left:801px;top:643px;width:90px;height:20px;"><i class="u"><b style="left:5px;top:2px;width:1px"></b><b style="left:4px;top:3px;width:3px"></b><b style="left:3px;top:4px;width:5px"></b></i><i class="w"><b style="left:3px;top:1px;width:5px"></b><b style="left:4px;top:2px;width:3px"></b><b style="left:5px;top:3px;width:1px"></b></i></div>
<div class="t" style="left:803.05px;top:644px;font-size:12.5px;transform:scaleX(0.8000)">3</div>
<div class="a " style="left:809px;top:646px;width:1px;height:12px;background:#000"></div>
<div class="t" style="left:41.16px;top:697px;font-size:12.5px;transform:scaleX(0.9427)">Current IV Deviation:</div>
<div class="t" style="left:156.60px;top:697px;font-size:12.5px;transform:scaleX(0.9072)">0</div>
<div class="t" style="left:169.90px;top:697px;font-size:12.5px;transform:scaleX(0.9536)">Calculation Time:</div>
<div class="t" style="left:269.10px;top:697px;font-size:12.5px;transform:scaleX(0.9251)">0 ms</div>
<div class="t" style="left:300.91px;top:697px;font-size:12.5px;transform:scaleX(0.9374)">Calculation Progress:</div>
<div class="a " style="left:417px;top:696px;width:75px;height:16px;background:#e6e6e6;border:1px solid #bcbcbc"></div>
<svg class="a" style="left:898px;top:702px" width="11" height="11"><rect x="8" y="0" width="2" height="2" fill="#a5a5a5"/><rect x="4" y="4" width="2" height="2" fill="#a5a5a5"/><rect x="8" y="4" width="2" height="2" fill="#a5a5a5"/><rect x="0" y="8" width="2" height="2" fill="#a5a5a5"/><rect x="4" y="8" width="2" height="2" fill="#a5a5a5"/><rect x="8" y="8" width="2" height="2" fill="#a5a5a5"/></svg>
</div></div></body></html>
